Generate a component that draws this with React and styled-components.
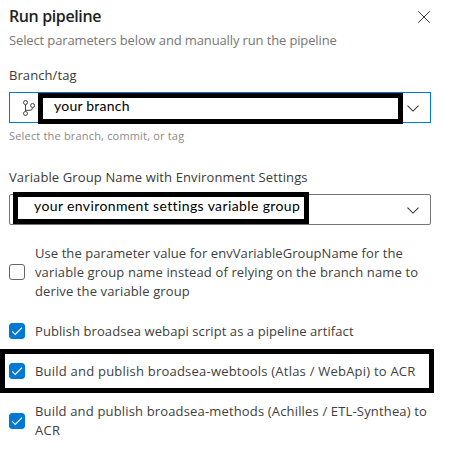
import React from "react";
import styled, { createGlobalStyle } from "styled-components";

const GlobalStyle = createGlobalStyle`
  * { box-sizing: border-box; }
  body { margin: 0; background: #fff; overflow: hidden; }
`;

const Panel = styled.main`
  display: flex;
  flex-direction: column;
  width: 450px;
  height: 451px;
  padding: 6px 19px 0 9px;
  background: #fff;
  color: #404040;
  font: 400 13px/19px "Open Sans", "Noto Sans", sans-serif;
`;

const Header = styled.header`
  display: flex;
  justify-content: space-between;
  height: 25px;
`;

const Title = styled.h1`
  margin: 0;
  color: #222;
  font-size: 16px;
  font-weight: 600;
  line-height: 20px;
  letter-spacing: -0.38px;
`;

const CloseButton = styled.button`
  width: 14px;
  height: 14px;
  margin-top: 4px;
  padding: 0;
  border: 0;
  background: none;
  line-height: 0;
`;

const Line = styled.span`
  display: block;
  white-space: nowrap;
  letter-spacing: ${({ $track = 0 }) => $track}px;
`;

const Subtitle = styled.p`
  margin: 0 0 16px;
  color: #777;
`;

const Field = styled.section`
  display: flex;
  flex-direction: column;
`;

const Label = styled.label`
  height: ${({ $height }) => $height}px;
  color: #3a3a3a;
`;

const Select = styled.div`
  position: relative;
  display: flex;
  align-items: center;
  justify-content: space-between;
  width: 422px;
  height: 31px;
  padding: 1px 11px 0 12px;
  border: 1px solid ${({ $active }) => ($active ? "#0078d4" : "#767676")};
  border-radius: ${({ $active }) => ($active ? 0 : 2)}px;
  svg:last-child { margin-left: auto; }
`;

const Callout = styled.div`
  position: absolute;
  left: ${({ $left }) => $left}px;
  top: ${({ $top }) => $top}px;
  width: ${({ $width }) => $width}px;
  height: ${({ $height }) => $height}px;
  padding-left: ${({ $inset = 0 }) => $inset}px;
  border: 5px solid #000;
  background: ${({ $fill = "#fff" }) => $fill};
  color: #000;
  font: 400 14px/${({ $leading = 16 }) => $leading}px Lato, sans-serif;
  pointer-events: none;
`;

const Hint = styled.p`
  margin: 3px 0 23px;
  height: 19px;
  color: #8a8a8a;
  font-size: 11px;
`;

const Options = styled.div`
  display: flex;
  flex-direction: column;
  gap: 21px;
  margin-top: 19px;
`;

const Option = styled.div`
  position: relative;
  display: flex;
  align-items: center;
  gap: 10px;
`;

const Checkbox = styled.span`
  display: flex;
  flex: none;
  width: 16px;
  height: 16px;
  margin-top: -1px;
  border: 1px solid ${({ $checked }) => ($checked ? "#0078d4" : "#666")};
  border-radius: 3px;
  background: ${({ $checked }) => ($checked ? "#0078d4" : "#fff")};
`;

const CloseIcon = () => (
  <svg width="14" height="14" viewBox="0 0 14 14" fill="none" stroke="#333" strokeWidth="1">
    <path d="M1.2 1.2 12.8 12.8M12.8 1.2 1.2 12.8" />
  </svg>
);

const BranchIcon = () => (
  <svg width="15" height="18" viewBox="0 0 15 18" fill="none" stroke="#444" strokeWidth="1">
    <circle cx="3.5" cy="3.5" r="2" />
    <circle cx="3.5" cy="14.5" r="2" />
    <circle cx="10.6" cy="6.5" r="2" />
    <path d="M3.5 5.5V12.5M3.5 11.3H8Q10.6 11.3 10.6 8.5" />
  </svg>
);

const ChevronIcon = () => (
  <svg width="12" height="7" viewBox="0 0 12 7" fill="none" stroke="#333" strokeWidth="1.05">
    <path d="M.5.6 6 6.1 11.5.6" />
  </svg>
);

const CheckIcon = () => (
  <svg width="14" height="14" viewBox="0 0 14 14" fill="none" stroke="#fff" strokeWidth="1.15">
    <path d="M2.2 7.3 5.3 10.4 12 3.7" />
  </svg>
);

const options = [
  {
    lines: [
      ["Use the parameter value for envVariableGroupName for the", 0.07],
      ["variable group name instead of relying on the branch name to", 0.13],
      ["derive the variable group", 0.12],
    ],
  },
  { checked: true, lines: [["Publish broadsea webapi script as a pipeline artifact", 0.08]] },
  {
    checked: true,
    highlighted: true,
    lines: [["Build and publish broadsea-webtools (Atlas / WebApi) to ACR", 0.22]],
  },
  {
    checked: true,
    lines: [
      ["Build and publish broadsea-methods (Achilles / ETL-Synthea) to", 0.16],
      ["ACR", 0.3],
    ],
  },
];

export default function App() {
  return (
    <Panel>
      <GlobalStyle />
      <Header>
        <Title>Run pipeline</Title>
        <CloseButton aria-label="Close"><CloseIcon /></CloseButton>
      </Header>
      <Subtitle>
        <Line $track={-0.13}>Select parameters below and manually run the pipeline</Line>
      </Subtitle>
      <Field>
        <Label $height={26}><Line $track={0.08}>Branch/tag</Line></Label>
        <Select $active>
          <BranchIcon />
          <Callout $left={28} $top={0} $width={365} $height={31} $inset={11} $leading={15}>
            <Line $track={0.22}>your branch</Line>
          </Callout>
          <ChevronIcon />
        </Select>
        <Hint><Line $track={0.18}>Select the branch, commit, or tag</Line></Hint>
      </Field>
      <Field>
        <Label $height={26}>
          <Line $track={0.12}>Variable Group Name with Environment Settings</Line>
        </Label>
        <Select>
          <Callout $left={3} $top={-3} $width={296} $height={32} $inset={16} $leading={18}>
            <Line $track={0.38}>your environment settings variable group</Line>
          </Callout>
          <ChevronIcon />
        </Select>
      </Field>
      <Options>
        {options.map(({ checked, highlighted, lines }) => (
          <Option key={lines[0][0]}>
            <Checkbox $checked={checked} role="checkbox" aria-checked={!!checked}>
              {checked && <CheckIcon />}
            </Checkbox>
            <div>
              {lines.map(([text, track]) => <Line key={text} $track={track}>{text}</Line>)}
            </div>
            {highlighted && (
              <Callout $left={-9} $top={-13} $width={434} $height={44} $fill="transparent" />
            )}
          </Option>
        ))}
      </Options>
    </Panel>
  );
}
